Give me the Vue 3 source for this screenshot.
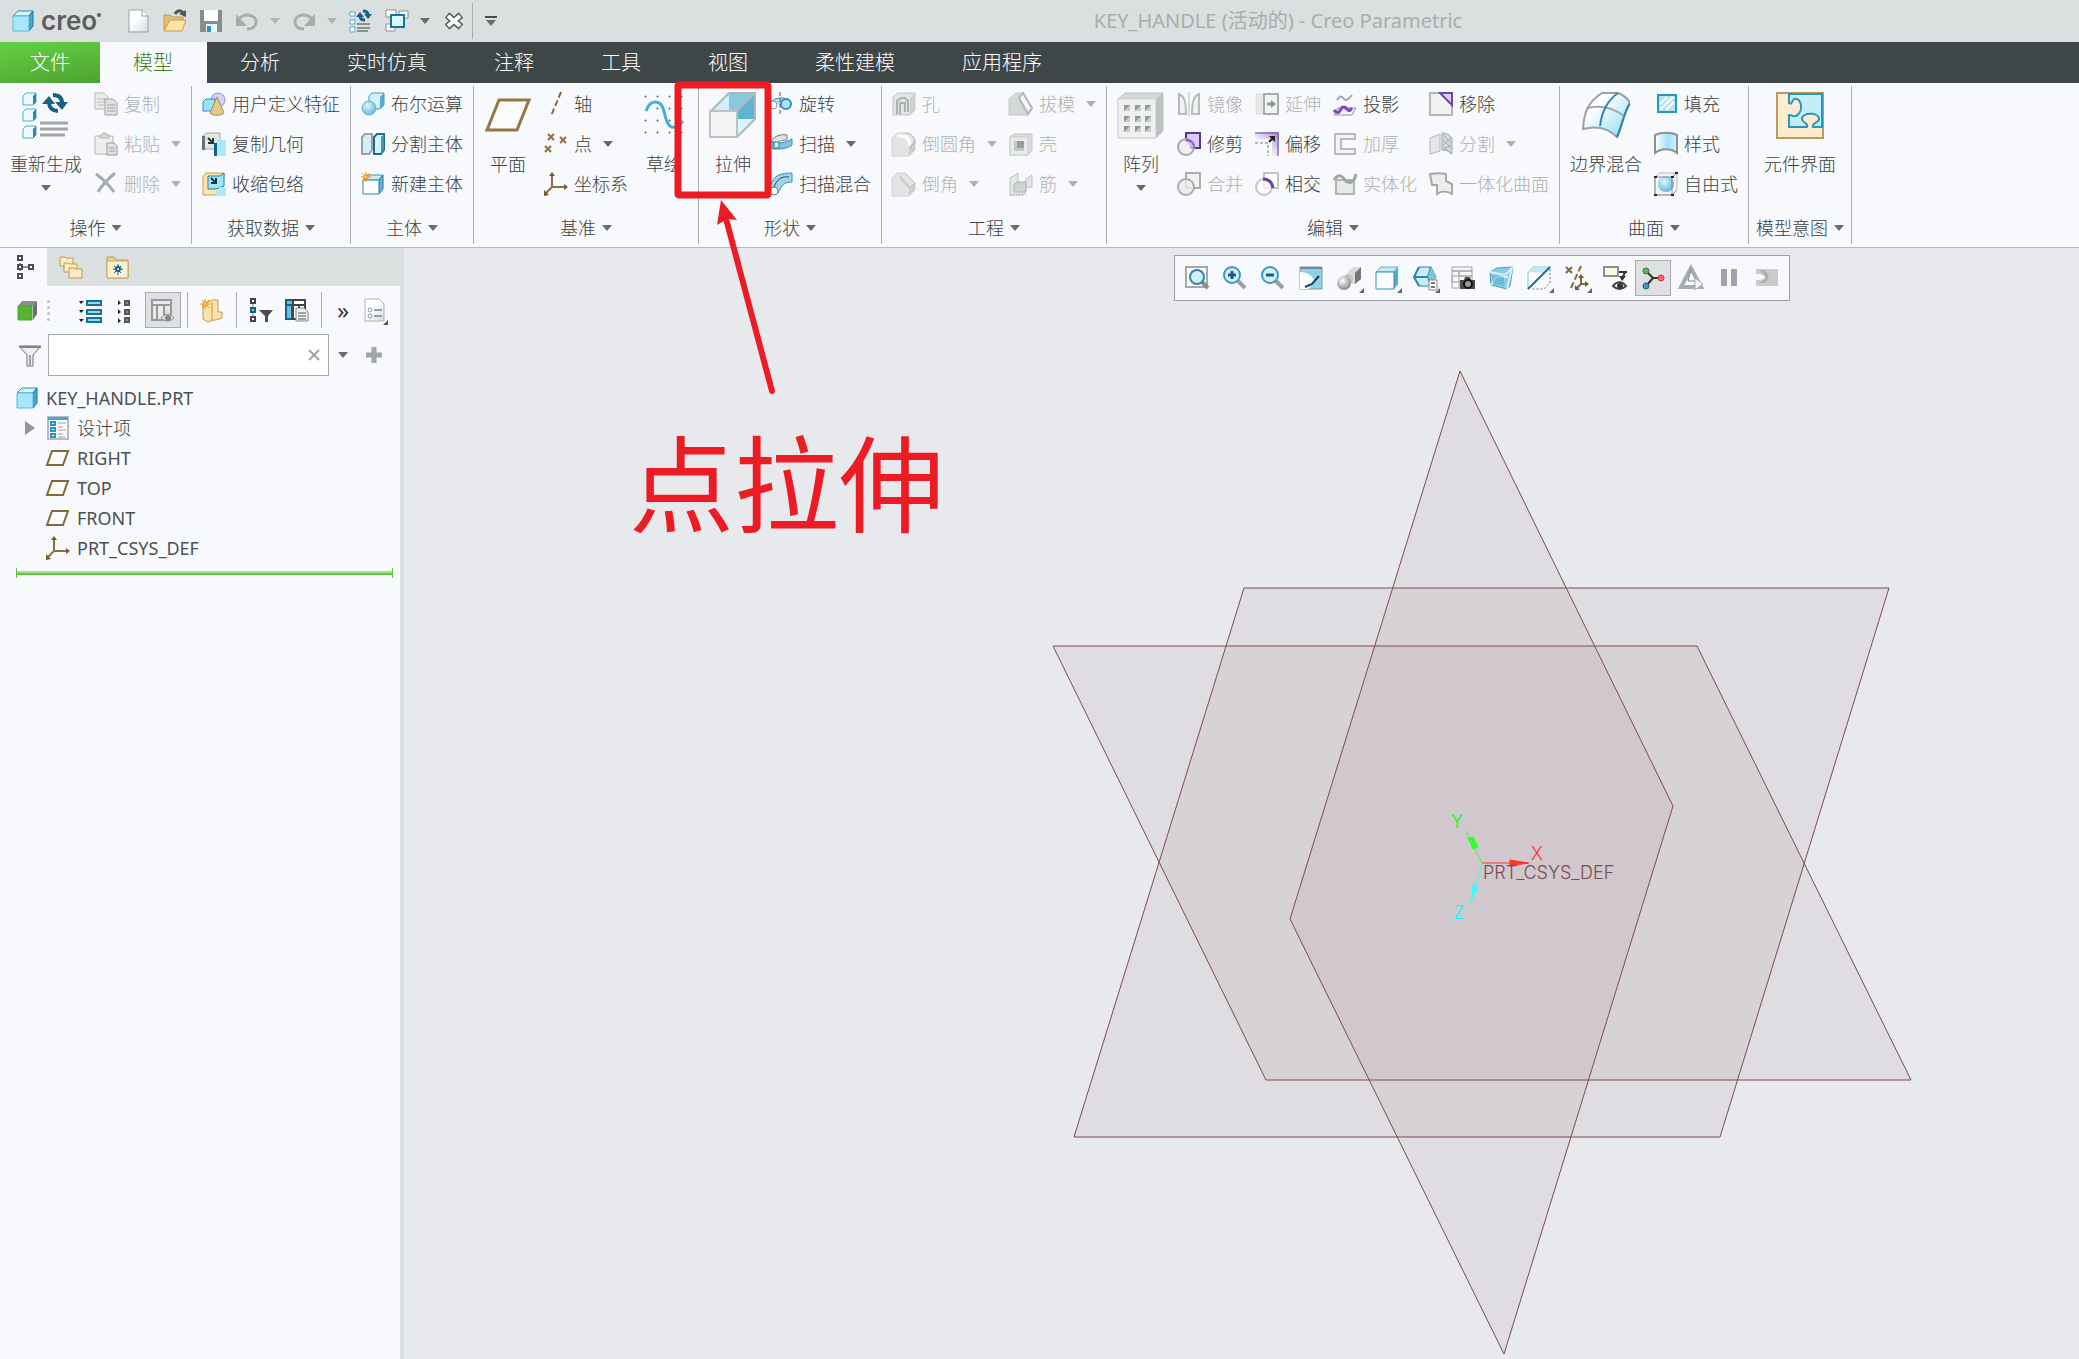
<script setup>
import { ref } from "vue";

const icons = {
  cube: `<path d="M2 7l5-5h15l-4 5z" fill="#d9f5ff" stroke="#2b8ab5"/><path d="M18 7l4-5v15l-4 5z" fill="#4aa5cb" stroke="#1f78a3"/><path d="M2 7h16v15H2z" fill="#a9e6fc" stroke="#5cb8dc"/>`,
  novo: `<path d="M2 1h13l6 6v16H2z" fill="url(#g-page)" stroke="#9b9fa1"/><path d="M15 1v6h6" fill="#fff" stroke="#9b9fa1"/>`,
  open: `<path d="M1 21V6h6l2 2h11v5" fill="#e5be73" stroke="#c79a4a"/><path d="M1 22l6-11h16l-4 11z" fill="#fbe3ac" stroke="#c79a4a"/><path d="M12 5c2-4 6-4 8-1" fill="none" stroke="#555" stroke-width="3"/><path d="M23 1v7l-7-3z" fill="#555"/>`,
  save: `<path d="M1 1h22v22H1z" fill="#8a8d8e"/><path d="M5 1h14v11H5z" fill="#fff"/><path d="M7 15h11v8H7z" fill="#e7f6fc"/><path d="M8 17h4v6H8z" fill="#2f93b8"/>`,
  undo: `<path d="M4 10c6-7 18-4 17 4-1 5-6 6-9 6" fill="none" stroke="#a8acac" stroke-width="3"/><path d="M1 5v12h11z" fill="#a8acac"/>`,
  redo: `<path d="M20 10C14 3 2 6 3 14c1 5 6 6 9 6" fill="none" stroke="#a8acac" stroke-width="3"/><path d="M23 5v12H12z" fill="#a8acac"/>`,
  regen: `<g fill="#fff" stroke="#4aaed6" stroke-width="1"><path d="M1 3h5v4H1zM1 11h5v4H1zM1 18h5v5H1z"/></g><path d="M8 15h13M8 19h13M8 22h11" stroke="#8c8f90" stroke-width="2"/><path d="M11 7c0 3 2 4 5 4M14 2c3 0 5 1 5 4" fill="none" stroke="#17607f" stroke-width="3"/><path d="M7 8l4-5 4 5zM15 5h8l-4 5z" fill="#17607f"/>`,
  windows: `<g fill="#fff" stroke="#8c9091"><path d="M1 1h10v7H1zM14 2h9v7h-9zM1 15h9v7H1z"/><path d="M6 6h13v12H6z" fill="#dff5fc" stroke="#17749b" stroke-width="2"/></g>`,
  close: `<path d="M5 6l14 12M19 6L5 18" stroke="#5c5f60" stroke-width="7"/><path d="M6 7l12 10M18 7L6 17" stroke="#fff" stroke-width="4"/>`,
  copy: `<g fill="#eceeee" stroke="#b6b9ba"><path d="M1 1h9l4 4v12H1z"/><path d="M3 7h8M3 10h8M3 13h8" /><path d="M11 7h8l4 4v12H11z" fill="#e0e2e3" stroke="#9fa3a4"/><path d="M13 13h8M13 16h8M13 19h8" stroke="#9fa3a4"/></g>`,
  paste: `<g fill="#eceeee" stroke="#b3b6b7"><path d="M1 4h18v18H1z"/><path d="M6 6V3h2l1-2h3l1 2h2v3z" fill="#d5d8d8"/><path d="M13 11h7l3 3v9H13z" fill="#e0e2e3" stroke="#999"/><path d="M15 16h6M15 19h6" stroke="#999"/></g>`,
  del: `<path d="M2 2c7 5 13 11 18 18M21 1C14 7 8 13 4 20" fill="none" stroke="#a9acad" stroke-width="3"/>`,
  udf: `<circle cx="16" cy="8" r="7" fill="#cdd3fa" stroke="#8a92d6"/><path d="M1 10l3-3h9v10l-2 2H1z" fill="#9fe0f8" stroke="#2f93b8"/><path d="M15 5l7 16c-3 3-11 3-14 0z" fill="#e6c98c" stroke="#a98a4c"/>`,
  copygeo: `<path d="M1 4l3-3h14v13l-2 3H1z" fill="#e3e5e6" stroke="#a4a7a8"/><path d="M0 4h3v14H0z" fill="#5f7680"/><path d="M6 6l5 5M11 6v5H6" fill="none" stroke="#333" stroke-width="2"/><path d="M12 12l4-4h8v16H14z" fill="#abe9fd"/><path d="M12 11h3v13h-3z" fill="#145f82"/>`,
  shrink: `<path d="M1 5l3-4h18v4l-8 18H1z" fill="#fbe4af" stroke="#cf9f49"/><path d="M6 4h12l4-3v13l-8 3H6z" fill="#a5e4fa" stroke="#1c7ca4"/><path d="M9 6l5 5M14 6v5H9" fill="none" stroke="#12394b" stroke-width="2"/><path d="M14 24v-5l4-4h6v9z" fill="#abe9fd"/>`,
  bool: `<path d="M8 4l3-3h12v12l-4 4H8z" fill="#d3f1fb" stroke="#3c9cc2"/><path d="M19 5l4-4v12l-4 4z" fill="#55a9cb"/><circle cx="8" cy="16" r="7" fill="url(#g-ball)" stroke="#6db5d0"/>`,
  splitbody: `<path d="M1 5l3-3h7v16l-3 4H1z" fill="#d3eef7" stroke="#9ca1a3" stroke-width="2"/><path d="M13 5l3-3h7v16l-3 4h-7z" fill="#d3f2fc" stroke="#1b6e93" stroke-width="2"/><path d="M20 5l3-3v16l-3 4z" fill="#3c94ba"/>`,
  newbody: `<path d="M2 8l4-5h16l-4 5z" fill="#cdeffb" stroke="#3a95bb"/><path d="M18 8l4-5v14l-4 5z" fill="#67b7d7" stroke="#1f7ba4"/><path d="M2 8h16v14H2z" fill="#fff" stroke="#2b8ab5"/><path d="M5 0v10M0 5h10M1 1l8 8M9 1L1 9" stroke="#f28a16" stroke-width="1"/><circle cx="5" cy="5" r="2" fill="#ffd34a" stroke="#f28a16"/>`,
  axis: `<path d="M17 0L7 24" stroke="#84683a" stroke-width="2" stroke-dasharray="6 3"/>`,
  points: `<path d="M4 2l6 6M10 2L4 8M16 5l6 6M22 5l-6 6M1 14l6 6M7 14l-6 6" stroke="#8d7040" stroke-width="2"/>`,
  csys: `<path d="M8 3v12h13M8 15l-6 6" fill="none" stroke="#8d7040" stroke-width="2"/><path d="M5 4l3-4 3 4zM20 12l4 3-4 3zM0 24v-6l5 5z" fill="#77592a"/>`,
  revolve: `<path d="M1 13C1 5 19 3 22 11" fill="#a7dff3" stroke="#4397b9"/><circle cx="4" cy="13" r="4" fill="#fff" stroke="#8c9091"/><circle cx="17" cy="12" r="5" fill="#abe5f9" stroke="#2f93b8" stroke-width="2"/><path d="M11 0v24" stroke="#555" stroke-dasharray="4 2"/>`,
  sweep: `<path d="M2 9c4-6 12-7 16-6v5c-5 0-9 1-9 4z" fill="#dfe1e2" stroke="#777"/><path d="M3 10c6 2 13 1 20-3v6c-4 3-9 4-14 4H3z" fill="#83c4de" stroke="#3b8fb2"/><path d="M5 10h5v6H5z" fill="#cceef9" stroke="#2c7c9e"/>`,
  sweepblend: `<path d="M1 15C4 3 12 1 23 1v9C15 10 13 13 9 21z" fill="#9bd6ed" stroke="#3b8fb2"/><path d="M5 15C8 7 13 4 20 5" fill="none" stroke="#444"/><circle cx="5" cy="19" r="4" fill="#fff" stroke="#777"/>`,
  hole: `<path d="M1 5l5-4h17v17l-5 5H1z" fill="#e1e3e3" stroke="#c4c7c7"/><path d="M18 6l5-5v17l-5 5z" fill="#cdd0d0"/><path d="M5 22V9l4-3h4l3 3v11M8 22V11h5v9" fill="none" stroke="#adb0b1" stroke-width="2"/>`,
  round: `<path d="M0 6l5-5h8c7 0 10 5 10 11v6l-6 6H0z" fill="#e3e5e5" stroke="#d0d3d3"/><path d="M5 4h4c7 0 9 5 9 10" fill="none" stroke="#fff" stroke-width="3"/><path d="M17 24v-9l6-7v10z" fill="#cbcece"/><path d="M13 1c7 0 10 5 10 10l-6 5" fill="none" stroke="#b1b4b5"/>`,
  chamfer: `<path d="M0 6l5-5h8l10 10v7l-6 6H0z" fill="#e3e5e5" stroke="#d0d3d3"/><path d="M17 24v-8l6-5v7z" fill="#cbcece"/><path d="M8 4l9 10M13 1l10 10-6 5-9-10" fill="none" stroke="#b9bcbc"/>`,
  draft: `<path d="M0 7l7-6h7l9 16-4 6H0z" fill="#d5d8d8" stroke="#c4c7c7"/><path d="M10 6l4-5 9 15-4 6z" fill="#f5f6f6" stroke="#b4b7b8" stroke-width="2"/>`,
  shell: `<path d="M1 5l4-3h18v17l-4 4H1z" fill="#dadddd" stroke="#c1c4c4"/><path d="M1 5h18v18H1z" fill="#e9ebeb" stroke="#c8cbcb"/><path d="M5 9h10v10H5z" fill="#c6c9c9"/><path d="M8 9h7v7H8z" fill="#9b9e9f"/>`,
  rib: `<path d="M1 6l8-5v15l14-1V3l-6 4v12l-3 4H1z" fill="#e4e6e6" stroke="#bdc0c0"/><path d="M5 12l4-2h8v10H5z" fill="#d0d3d3" stroke="#b0b3b4"/><path d="M1 23h16" stroke="#9b9e9f" stroke-dasharray="1 2"/>`,
  mirror: `<g fill="#f0f1f1" stroke="#b9bcbd" stroke-width="2"><path d="M2 2c5 2 7 7 7 20H2z"/><path d="M22 2c-5 2-7 7-7 20h7z"/><path d="M12 0v24" stroke-width="1"/></g>`,
  trim: `<path d="M9 1h14v15H14c0-5-2-7-5-7z" fill="#d9cdf8" stroke="#5c3494" stroke-width="2"/><circle cx="9" cy="15" r="8" fill="#ebedee" fill-opacity=".7" stroke="#a4a7a8" stroke-width="2"/><path d="M9 8c5 0 8 3 8 8" fill="none" stroke="#9a5ae0" stroke-width="2"/>`,
  merge: `<path d="M9 1h14v15H9z" fill="#eff0f0" stroke="#abaeaf" stroke-width="2"/><circle cx="9" cy="15" r="8" fill="#eceeee" stroke="#abaeaf" stroke-width="2"/><path d="M9 8v8h7" fill="none" stroke="#cfd2d2"/>`,
  extend: `<path d="M1 2h9v20H1z" fill="#e5e7e7" stroke="#dcdede"/><path d="M9 2h14v20H9z" fill="#f2f3f3" stroke="#a9acad" stroke-width="2"/><path d="M12 12h5" stroke="#8f9293" stroke-width="3"/><path d="M16 8l5 4-5 4z" fill="#8f9293"/>`,
  offset: `<path d="M0 0h24v24h-7V7H0z" fill="url(#g-purple)"/><path d="M0 1h23v23" fill="none" stroke="#6e4a98" stroke-width="1"/><path d="M0 11h13v13" fill="none" stroke="#777" stroke-dasharray="3 2" stroke-width="1"/><path d="M14 10l4-4" stroke="#222" stroke-width="2"/><path d="M14 4h6v6z" fill="#222"/>`,
  intersect: `<path d="M9 1h14v15H9z" fill="#fff" stroke="#c2c5c6" stroke-width="2"/><circle cx="9" cy="15" r="8" fill="#fff" stroke="#c2c5c6" stroke-width="2"/><path d="M9 8v8h7" fill="none" stroke="#d8dadb"/><path d="M8 7c6 0 9 3 10 9" fill="none" stroke="#6c3fa3" stroke-width="3"/>`,
  project: `<path d="M4 8c4-6 5-3 7-1s4 1 8-4" fill="none" stroke="#a5a8a9" stroke-width="2"/><path d="M5 16h18l-4 7H1z" fill="#f3f4f4" stroke="#8f9293"/><path d="M1 18c3 4 5 3 7-1s5-1 7 1 3-1 4-2" fill="none" stroke="#8444c4" stroke-width="3"/>`,
  thicken: `<path d="M2 2h20v5H8v10h14v5H2z" fill="#f2f3f3" stroke="#b9bcbd" stroke-width="2"/>`,
  solidify: `<path d="M3 8h18v14H3z" fill="#e7e9e9" stroke="#b0b3b4" stroke-width="2"/><path d="M1 8c5-7 8-4 11 0s9 4 11-6" fill="none" stroke="#a1a4a5" stroke-width="3"/>`,
  remove: `<path d="M1 1h22v22H1z" fill="#f1f2f2" stroke="#b4b7b8" stroke-width="2"/><path d="M11 1h12v12z" fill="#dccff9" stroke="#6f45a8" stroke-width="2"/>`,
  split: `<path d="M1 6l10-4v17L1 22z" fill="#e6e8e8" stroke="#b4b7b8"/><path d="M13 1c4 0 8 2 10 5v16c-3-3-6-4-10-4z" fill="#d7dada" stroke="#a5a8a9"/><path d="M14 3l8 8M14 8l8 8M14 14l8 8M22 6l-8 7M22 13l-8 5" stroke="#a5a8a9"/>`,
  unify: `<path d="M1 2c6-1 11-1 16 0v7l6 3v10c-5-3-11-3-15 0V13H3z" fill="#eceeee" stroke="#a5a8a9" stroke-width="2"/>`,
  fill: `<path d="M4 3h18v17H4z" fill="#abe5fa" stroke="#2d94bd" stroke-width="2"/><path d="M6 12l7-7M6 18L19 5M12 18l8-8" stroke="#fff" stroke-width="2"/>`,
  style: `<path d="M1 3c6-3 16-3 22 0v18c-6-5-16-5-22 0z" fill="url(#g-style)" stroke="#8f9293" stroke-width="2"/>`,
  freestyle: `<path d="M1 5l5-4h17v17l-5 5H1z" fill="#f2f3f3" stroke="#bbb"/><circle cx="12" cy="12" r="8" fill="url(#g-ball)"/><path d="M1 5h17v18H1zM18 5l5-4M18 23l5-5" fill="none" stroke="#8c8f90"/><path d="M0 4h3v2H0zM17 4h3v2h-3zM0 22h3v2H0zM17 22h3v2h-3zM21 0h3v2h-3z" fill="#222"/>`,
  treetab: `<g fill="#fff" stroke="#4a4c4d" stroke-width="2"><path d="M8 8v8M11 12h6" stroke="#8c8f90"/><path d="M6 1h4v4H6zM6 10h4v4H6zM6 19h4v4H6zM17 10h4v4h-4z"/></g>`,
  folders: `<g fill="#fdebc4" stroke="#c39a52"><path d="M1 2h5l1 1h7v8H1z"/><path d="M5 8h5l1 1h7v8H5z"/><path d="M10 13h5l1 1h7v9H10z"/></g>`,
  favorites: `<path d="M1 2h7l2 3h12v18H1z" fill="#efcf8f" stroke="#c39a52"/><path d="M1 6h21v17H1z" fill="#fdf0cf" stroke="#c9a45e"/><path d="M12 9v11M7 14h10M8 11l7 7M15 11l-7 7" stroke="#17607f" stroke-width="1"/><circle cx="12" cy="14" r="3" fill="#17607f"/><circle cx="12" cy="14" r="1" fill="#fff"/>`,
  greencube: `<path d="M3 8l4-5h15l-4 5z" fill="#8b8e8f"/><path d="M18 8l4-5v13l-4 6z" fill="#6f7273"/><path d="M3 8h14v14H3z" fill="#58b534" stroke="#4aa32a"/>`,
  expand: `<path d="M8 3h14v4H8zM8 12h14v4H8zM8 20h14v4H8z" fill="#87dcfb" stroke="#1c6f94" stroke-width="2"/><path d="M0 3h5L2 6zM0 12h5l-3 3zM0 21h5l-3 3z" fill="#222"/>`,
  collapse: `<path d="M10 3h4v4h-4zM10 12h4v4h-4zM10 20h4v4h-4z" fill="#8c8f90" stroke="#555" stroke-width="2"/><path d="M3 2v5l3-2zM3 11v5l3-2zM3 20v5l3-2z" fill="#222"/>`,
  columns: `<path d="M1 2h19v5H1zM1 7h5v15H1zM6 7h7v15H6zM13 7h7v10" fill="#e8e9ea" stroke="#979a9b" stroke-width="2"/><path d="M10 20c4-5 9-5 13 0-4 4-9 4-13 0z" fill="#ddd" stroke="#8c8f90"/><circle cx="17" cy="20" r="3" fill="#85888a"/>`,
  layer: `<path d="M3 6l9-4h6v12h4v6l-6 2h-3l-5 2-5-3z" fill="#fbe3ad" stroke="#c79a4a"/><path d="M12 4v19" stroke="#c79a4a"/><path d="M5 1v10M0 6h10M2 2l7 8M9 2L2 10" stroke="#f28a16"/><circle cx="5" cy="6" r="2" fill="#ffd34a" stroke="#f28a16"/>`,
  treefilter: `<path d="M4 5v16" stroke="#888"/><g fill="#fff" stroke="#444" stroke-width="2"><path d="M2 1h4v4H2zM2 19h4v4H2z"/><path d="M2 10h4v4H2z" fill="#6fd0f3" stroke="#17607f"/></g><path d="M10 12h14l-5 6v6h-3v-6z" fill="#4a4c4d"/>`,
  treecols: `<path d="M1 2h19v5H1zM1 7h6v14H1z" fill="#62c2e6" stroke="#17607f" stroke-width="2"/><path d="M8 2h12v5H8zM8 7h6v14H8zM14 7h6v5" fill="#fff" stroke="#444" stroke-width="2"/><path d="M11 10h8l4 4v9H11z" fill="#f0f1f1" stroke="#85888a"/><path d="M13 15h8M13 18h8M13 21h8" stroke="#555"/>`,
  doc: `<path d="M1 1h14l5 5v17H1z" fill="url(#g-page)" stroke="#b0b3b4"/><path d="M10 12h8M10 18h8" stroke="#999" stroke-width="2"/><g fill="none" stroke="#999"><circle cx="6" cy="12" r="2"/><circle cx="6" cy="18" r="2"/></g><path d="M24 22v5h-5z" fill="#555"/>`,
  funnel: `<path d="M1 3h22l-8 9v11h-6V12z" fill="#eef0f0" stroke="#6f7273"/><path d="M1 3h22v2H2z" fill="#808384"/><path d="M12 12v10" stroke="#9ea1a2" stroke-width="2"/>`,
  plus: `<path d="M12 4v16M4 12h16" stroke="#a2a6a7" stroke-width="5"/>`,
  design: `<path d="M2 1h20v22H2z" fill="#f8f9f9" stroke="#b9bcbd" stroke-width="2"/><path d="M2 1h20v3H2z" fill="#43a9d4"/><path d="M5 6h4v3H5zM5 12h4v3H5zM5 18h4v3H5z" fill="#fff" stroke="#2d94bd" stroke-width="2"/><path d="M12 7h8M12 11h5M12 14h8M12 18h5M12 21h7" stroke="#9fa2a3"/>`,
  plane: `<path d="M6 5h16l-5 14H1z" fill="#fbfbfa" stroke="#84683a" stroke-width="2"/>`,
  refit: `<path d="M1 1h21v20H1z" fill="#fdfdfd" stroke="#a5a8a9" stroke-width="2"/><path d="M17 16l6 6" stroke="#8c8f90" stroke-width="4"/><circle cx="12" cy="11" r="7" fill="#d5effa" stroke="#2d87ad" stroke-width="2"/>`,
  zoomin: `<path d="M15 15l7 7" stroke="#9c9fa0" stroke-width="4"/><circle cx="9" cy="9" r="8" fill="#d5effa" stroke="#3a97be" stroke-width="2"/><path d="M9 5v8M5 9h8" stroke="#145f82" stroke-width="3"/>`,
  zoomout: `<path d="M15 15l7 7" stroke="#9c9fa0" stroke-width="4"/><circle cx="9" cy="9" r="8" fill="#d5effa" stroke="#3a97be" stroke-width="2"/><path d="M5 9h8" stroke="#145f82" stroke-width="3"/>`,
  repaint: `<path d="M1 1h22v22H1z" fill="#8fd3ea" stroke="#8a9498"/><path d="M1 2h22" stroke="#6d8f9c" stroke-width="2"/><path d="M1 6c7 0 13 4 15 10l-7 7H1z" fill="#fff"/><path d="M20 10l-7 8-7 3" fill="none" stroke="#123f53" stroke-width="2"/>`,
  shading: `<path d="M10 7l6-6h8v12l-6 5h-8z" fill="#d9dbdb"/><path d="M18 7l6-6v12l-6 5z" fill="#737677"/><circle cx="11" cy="13" r="5" fill="#bfc1c2"/><circle cx="7" cy="17" r="7" fill="url(#g-grey)"/>`,
  saved: `<path d="M1 6l5-5h17l-4 5z" fill="#c2ecfa" stroke="#5db3d2"/><path d="M19 6l4-5v17l-4 5z" fill="#58a9c9"/><path d="M1 6h18v17H1z" fill="#fcfeff" stroke="#2d94bd"/>`,
  viewmgr: `<path d="M6 1h12l5 10-5 9H6l-5-9z" fill="#c4ecf9" stroke="#2d87ad"/><path d="M1 11h14l3-10M15 11l3 9M6 1L1 11l5 9" fill="none" stroke="#2d87ad" stroke-width="2"/><path d="M18 1l5 10-5 9-3-9z" fill="#7fc3dd"/><path d="M16 14h8v10h-8z" fill="#fff" stroke="#85888a"/><path d="M18 17h4M18 21h4" stroke="#777" stroke-width="2"/>`,
  snapshot: `<path d="M1 1h20v4H1zM1 5h7v17H1zM8 5h13v5H8zM1 10h20v6H1z" fill="#f6f7f7" stroke="#a0a3a4"/><path d="M9 14h4l1-3h5l1 3h4v9H9z" fill="#4a4c4d"/><circle cx="17" cy="18" r="4" fill="#999" stroke="#111" stroke-width="2"/>`,
  persp: `<path d="M1 6l7-4 16-1-3 19-3 3-16-4z" fill="#8acce4" stroke="#4a9dbd"/><path d="M1 6l15 3 7-7-5 21M2 19l5-8h12" fill="none" stroke="#d7f2fb" stroke-width="2"/><path d="M3 9l12 2v9L4 18z" fill="#5cadcb" fill-opacity=".6"/>`,
  section: `<path d="M1 7l5-6h17L1 23z" fill="#fff" stroke="#7fc2da"/><path d="M3 6l4-5h15l-5 6z" fill="#bfe9f7"/><path d="M23 3v14l-6 6H4" fill="none" stroke="#777" stroke-dasharray="2 2"/><path d="M23 1L1 23" stroke="#1e6f92" stroke-width="2"/>`,
  datums: `<path d="M1 1l6 6M7 1L1 7" stroke="#84683a" stroke-width="2"/><path d="M16 0L5 24" stroke="#84683a" stroke-width="2" stroke-dasharray="6 3"/><path d="M16 11v7h5M16 18l-4 4" fill="none" stroke="#84683a" stroke-width="2" /><path d="M13 12l3-4 3 4zM20 15l4 3-4 3zM10 24v-5l5 5z" fill="#77592a"/>`,
  annot: `<path d="M1 1h14v9H1z" fill="#fff8df" stroke="#8c8f90" stroke-width="2"/><path d="M16 6h8M22 6l-3 7" stroke="#333" stroke-width="2"/><path d="M16 10h7l-4 5z" fill="#333"/><path d="M10 20c4-5 9-5 13 0-4 4-9 4-13 0z" fill="#fff" stroke="#444" stroke-width="2"/><circle cx="17" cy="20" r="3" fill="#333"/>`,
  spin: `<path d="M5 5l7 7M12 12h8M12 12l-7 8" stroke="#333" stroke-width="2"/><circle cx="5" cy="5" r="3" fill="#64b266" stroke="#2b7c33"/><circle cx="20" cy="12" r="3" fill="#f0686c" stroke="#c63a40"/><circle cx="5" cy="20" r="3" fill="#3c96c4" stroke="#17607f"/>`,
  sim: `<path d="M12 2L2 21h20z" fill="none" stroke="#a9acad" stroke-width="4"/><path d="M12 3l-3 12h7" fill="none" stroke="#85888a"/><path d="M16 12l8 6-8 6z" fill="#f4f5f5" stroke="#a9acad"/>`,
  pause: `<path d="M4 3h6v17H4zM14 3h6v17h-6z" fill="#a0a2a4"/>`,
  resume: `<path d="M1 3h22v17H1v-6c12 0 12-6 0-6z" fill="#c9cbcd"/><path d="M3 4h6c6 3 6 10 0 13H5c8-4 6-9-2-13z" fill="#aeb0b2"/>`,
};

// ícones grandes, 48x48
const bigIcons = {
  regen: `<g fill="#eefaff" stroke="#4aaed6"><path d="M1 4l3-3h10v9l-3 3H1zM1 20l3-3h10v9l-3 3H1zM1 37l3-3h10v9l-3 3H1z"/></g><path d="M11 4l3-3v9l-3 3zM11 20l3-3v9l-3 3zM11 37l3-3v9l-3 3z" fill="#2d87ad"/><path d="M18 31h28M18 37h28M18 43h25" stroke="#a3a6a7" stroke-width="3"/><path d="M27 10c0 6 4 9 9 9M31 3c6 0 9 3 9 8" fill="none" stroke="#17607f" stroke-width="4"/><path d="M20 12l7-8 6 8zM33 10h13l-6 8z" fill="#17607f"/>`,
  plane: `<path d="M15 8h30L33 38H3z" fill="#fbfbfa" stroke="#947744" stroke-width="3"/>`,
  sketch: `<g fill="#666"><path d="M5 4h1v1H5zM17 4h1v1h-1zM29 4h1v1h-1zM41 4h1v1h-1zM17 16h1v1h-1zM29 16h1v1h-1zM41 16h1v1h-1zM5 28h1v1H5zM17 28h1v1h-1zM29 28h1v1h-1zM5 40h1v1H5zM17 40h1v1h-1zM29 40h1v1h-1zM41 40h1v1h-1z" stroke="#666"/></g><path d="M6 19c4-12 15-12 18 0 3 16 8 22 19 10" fill="none" stroke="#3fb0e0" stroke-width="3"/>`,
  extrude: `<path d="M2 19L20 1h26L28 19z" fill="#cbeefa"/><path d="M20 1h26L28 19h-8z" fill="#86cae2"/><path d="M46 1v26H28v-8z" fill="#5fb4d4"/><path d="M2 19L20 1v18z" fill="#d0f0fb"/><path d="M28 27h18L28 45z" fill="#d8f5ff"/><path d="M2 19L20 1h26v26L28 45M46 1L28 19" fill="none" stroke="#b0b8bb" stroke-width="2"/><path d="M1 19h27v26H1z" fill="#f4f5f5" stroke="#bfc2c3" stroke-width="2"/>`,
  pattern: `<path d="M1 7l7-6h38v38l-7 7H1z" fill="#d5d7d7" stroke="#c1c4c4"/><path d="M1 7h38v39H1z" fill="#eff0f0" stroke="#cfd2d2"/><path d="M39 7l7-6v38l-7 7z" fill="#bec1c1"/><path d="M7 13h6v6H7zM18 13h6v6h-6zM28 13h6v6h-6zM7 24h6v6H7zM18 24h6v6h-6zM28 24h6v6h-6zM7 34h6v6H7zM18 34h6v6h-6zM28 34h6v6h-6z" fill="#94979a"/><path d="M7 19l6-6v6zM18 19l6-6v6zM28 19l6-6v6zM7 30l6-6v6zM18 30l6-6v6zM28 30l6-6v6zM7 40l6-6v6zM18 40l6-6v6zM28 40l6-6v6z" fill="#c9cccc"/>`,
  boundary: `<path d="M1 37C2 20 6 10 20 1h16c5 2 10 6 12 10-6 9-7 20-13 34-8-8-19-12-34-8z" fill="url(#g-blue)" stroke="#9b9fa1" stroke-width="2"/><path d="M6 16c12-3 24-1 36 8" fill="none" stroke="#a5a8a9" stroke-width="2"/><path d="M36 1C26 8 20 18 18 34M48 11c-6 9-7 20-13 34" fill="none" stroke="#2d87ad" stroke-width="2"/>`,
  interface: `<path d="M1 1h46v45H1z" fill="#fdeccb" stroke="#b99a63" stroke-width="2"/><path d="M13 2h33v33H37c-2-4 6-4 6-8 0-7-17-7-17 0 0 4 7 4 5 8H13V23c5 0 2 2 7 1 8-4 6-19-2-17-3 2-1 6-5 4z" fill="#c3edfb" stroke="#2d94bd" stroke-width="2"/>`,
};

const quickA = ["novo", "open", "save"];

const tabs = ["分析", "实时仿真", "注释", "工具", "视图", "柔性建模", "应用程序"];

// t: texto, i: ícone, d: desabilitado, s: tem seta
const groups = ref([
  {
    nome: "操作",
    cols: [
      { big: "regen", t: "重新生成", s: true },
      {
        items: [
          { i: "copy", t: "复制", d: true },
          { i: "paste", t: "粘贴", d: true, s: true },
          { i: "del", t: "删除", d: true, s: true },
        ],
      },
    ],
  },
  {
    nome: "获取数据",
    cols: [
      {
        items: [
          { i: "udf", t: "用户定义特征" },
          { i: "copygeo", t: "复制几何" },
          { i: "shrink", t: "收缩包络" },
        ],
      },
    ],
  },
  {
    nome: "主体",
    cols: [
      {
        items: [
          { i: "bool", t: "布尔运算" },
          { i: "splitbody", t: "分割主体" },
          { i: "newbody", t: "新建主体" },
        ],
      },
    ],
  },
  {
    nome: "基准",
    cols: [
      { big: "plane", t: "平面" },
      {
        items: [
          { i: "axis", t: "轴" },
          { i: "points", t: "点", s: true },
          { i: "csys", t: "坐标系" },
        ],
      },
      { big: "sketch", t: "草绘" },
    ],
  },
  {
    nome: "形状",
    cols: [
      { big: "extrude", t: "拉伸" },
      {
        items: [
          { i: "revolve", t: "旋转" },
          { i: "sweep", t: "扫描", s: true },
          { i: "sweepblend", t: "扫描混合" },
        ],
      },
    ],
  },
  {
    nome: "工程",
    cols: [
      {
        items: [
          { i: "hole", t: "孔", d: true },
          { i: "round", t: "倒圆角", d: true, s: true },
          { i: "chamfer", t: "倒角", d: true, s: true },
        ],
      },
      {
        items: [
          { i: "draft", t: "拔模", d: true, s: true },
          { i: "shell", t: "壳", d: true },
          { i: "rib", t: "筋", d: true, s: true },
        ],
      },
    ],
  },
  {
    nome: "编辑",
    cols: [
      { big: "pattern", t: "阵列", s: true },
      {
        items: [
          { i: "mirror", t: "镜像", d: true },
          { i: "trim", t: "修剪" },
          { i: "merge", t: "合并", d: true },
        ],
      },
      {
        items: [
          { i: "extend", t: "延伸", d: true },
          { i: "offset", t: "偏移" },
          { i: "intersect", t: "相交" },
        ],
      },
      {
        items: [
          { i: "project", t: "投影" },
          { i: "thicken", t: "加厚", d: true },
          { i: "solidify", t: "实体化", d: true },
        ],
      },
      {
        items: [
          { i: "remove", t: "移除" },
          { i: "split", t: "分割", d: true, s: true },
          { i: "unify", t: "一体化曲面", d: true },
        ],
      },
    ],
  },
  {
    nome: "曲面",
    cols: [
      { big: "boundary", t: "边界混合" },
      {
        items: [
          { i: "fill", t: "填充" },
          { i: "style", t: "样式" },
          { i: "freestyle", t: "自由式" },
        ],
      },
    ],
  },
  {
    nome: "模型意图",
    cols: [{ big: "interface", t: "元件界面" }],
  },
]);

const tree = [
  { i: "plane", t: "RIGHT" },
  { i: "plane", t: "TOP" },
  { i: "plane", t: "FRONT" },
  { i: "csys", t: "PRT_CSYS_DEF" },
];

const viewTools = ref([
  { i: "refit" },
  { i: "zoomin" },
  { i: "zoomout" },
  { i: "repaint" },
  { i: "shading", s: true },
  { i: "saved", s: true },
  { i: "viewmgr", s: true },
  { i: "snapshot" },
  { i: "persp" },
  { i: "section", s: true },
  { i: "datums", s: true },
  { i: "annot" },
  { i: "spin", on: true },
  { i: "sim" },
  { i: "pause" },
  { i: "resume" },
]);

const busca = ref("");
</script>

<template>
  <div class="app">
    <svg class="defs" width="0" height="0">
      <defs>
        <linearGradient id="g-page" x1="0" y1="0" x2="1" y2="1">
          <stop offset="0.4" stop-color="#fff" />
          <stop offset="1" stop-color="#cfdde6" />
        </linearGradient>
        <linearGradient id="g-blue" x1="0" y1="0" x2="1" y2="1">
          <stop offset="0.3" stop-color="#fff" />
          <stop offset="0.8" stop-color="#a6e5fb" />
        </linearGradient>
        <linearGradient id="g-style">
          <stop offset="0" stop-color="#fff" />
          <stop offset="0.6" stop-color="#a0e3fb" />
          <stop offset="1" stop-color="#d5f3fd" />
        </linearGradient>
        <linearGradient id="g-purple" x1="0" y1="1" x2="1" y2="0">
          <stop offset="0.3" stop-color="#fff" />
          <stop offset="1" stop-color="#a98bd0" />
        </linearGradient>
        <radialGradient id="g-ball" cx="0.4" cy="0.35" r="0.7">
          <stop offset="0" stop-color="#e0f7ff" />
          <stop offset="1" stop-color="#5ab4d6" />
        </radialGradient>
        <radialGradient id="g-grey" cx="0.4" cy="0.35" r="0.7">
          <stop offset="0" stop-color="#fff" />
          <stop offset="1" stop-color="#7d8081" />
        </radialGradient>
      </defs>
    </svg>

    <header class="titlebar">
      <svg class="ico" viewBox="0 0 24 24" v-html="icons.cube"></svg>
      <span class="brand">creo<i class="dot"></i></span>
      <div class="quick">
        <button v-for="q in quickA" :key="q" class="quick-btn" :aria-label="q">
          <svg class="ico" viewBox="0 0 24 24" v-html="icons[q]"></svg>
        </button>
        <button class="quick-btn off" aria-label="undo">
          <svg class="ico" viewBox="0 0 24 24" v-html="icons.undo"></svg>
          <span class="seta"></span>
        </button>
        <button class="quick-btn off" aria-label="redo">
          <svg class="ico" viewBox="0 0 24 24" v-html="icons.redo"></svg>
          <span class="seta"></span>
        </button>
        <button class="quick-btn" aria-label="regenerate">
          <svg class="ico" viewBox="0 0 24 24" v-html="icons.regen"></svg>
        </button>
        <button class="quick-btn" aria-label="windows">
          <svg class="ico" viewBox="0 0 24 24" v-html="icons.windows"></svg>
          <span class="seta"></span>
        </button>
        <button class="quick-btn" aria-label="close">
          <svg class="ico" viewBox="0 0 24 24" v-html="icons.close"></svg>
        </button>
      </div>
      <button class="quick-more" aria-label="more"><span class="seta"></span></button>
      <h1 class="title">KEY_HANDLE (活动的) - Creo Parametric</h1>
    </header>

    <nav class="tabs">
      <button class="tab file">文件</button>
      <button class="tab active">模型</button>
      <button v-for="tab in tabs" :key="tab" class="tab">{{ tab }}</button>
    </nav>

    <section class="ribbon">
      <div v-for="g in groups" :key="g.nome" class="group">
        <div class="group-body">
          <template v-for="(col, index) in g.cols" :key="index">
            <button v-if="col.big" class="big">
              <svg class="big-ico" viewBox="0 0 48 48" v-html="bigIcons[col.big]"></svg>
              <span>{{ col.t }}</span>
              <span v-if="col.s" class="seta"></span>
            </button>
            <div v-else class="col">
              <button v-for="item in col.items" :key="item.t" class="cmd" :disabled="item.d">
                <svg class="ico" viewBox="0 0 24 24" v-html="icons[item.i]"></svg>
                <span>{{ item.t }}</span>
                <span v-if="item.s" class="seta"></span>
              </button>
            </div>
          </template>
        </div>
        <button class="group-name">{{ g.nome }}<span class="seta"></span></button>
      </div>
    </section>

    <main class="main">
      <aside class="side">
        <div class="side-tabs">
          <button class="side-tab active" aria-label="tree">
            <svg class="ico" viewBox="0 0 24 24" v-html="icons.treetab"></svg>
          </button>
          <button class="side-tab" aria-label="folders">
            <svg class="ico" viewBox="0 0 24 24" v-html="icons.folders"></svg>
          </button>
          <button class="side-tab" aria-label="favorites">
            <svg class="ico" viewBox="0 0 24 24" v-html="icons.favorites"></svg>
          </button>
        </div>

        <div class="side-tools">
          <svg class="ico" viewBox="0 0 24 24" v-html="icons.greencube"></svg>
          <span class="grip"><i></i><i></i><i></i><i></i></span>
          <button class="tool" aria-label="expand">
            <svg class="ico" viewBox="0 0 24 24" v-html="icons.expand"></svg>
          </button>
          <button class="tool" aria-label="collapse">
            <svg class="ico" viewBox="0 0 24 24" v-html="icons.collapse"></svg>
          </button>
          <button class="tool on" aria-label="columns">
            <svg class="ico" viewBox="0 0 24 24" v-html="icons.columns"></svg>
          </button>
          <span class="sep"></span>
          <button class="tool" aria-label="layer">
            <svg class="ico" viewBox="0 0 24 24" v-html="icons.layer"></svg>
          </button>
          <span class="sep"></span>
          <button class="tool" aria-label="tree filter">
            <svg class="ico" viewBox="0 0 24 24" v-html="icons.treefilter"></svg>
          </button>
          <button class="tool" aria-label="tree columns">
            <svg class="ico" viewBox="0 0 24 24" v-html="icons.treecols"></svg>
          </button>
          <span class="sep"></span>
          <button class="tool more">»</button>
          <button class="tool" aria-label="settings">
            <svg class="ico" viewBox="0 0 24 24" v-html="icons.doc"></svg>
          </button>
        </div>

        <div class="search">
          <svg class="ico" viewBox="0 0 24 24" v-html="icons.funnel"></svg>
          <div class="search-box">
            <input v-model="busca" type="text" aria-label="search" />
            <button class="clear" aria-label="clear" @click="busca = ''">
              <svg width="12" height="12" viewBox="0 0 12 12">
                <path d="M1 1l10 10M11 1L1 11" stroke="#a0a4a5" stroke-width="2" />
              </svg>
            </button>
          </div>
          <span class="seta"></span>
          <button class="add" aria-label="add">
            <svg class="ico" viewBox="0 0 24 24" v-html="icons.plus"></svg>
          </button>
        </div>

        <ul class="tree">
          <li class="root">
            <svg class="ico" viewBox="0 0 24 24" v-html="icons.cube"></svg>KEY_HANDLE.PRT
          </li>
          <li class="design">
            <svg class="caret" width="10" height="14" viewBox="0 0 10 14">
              <path d="M0 0l10 7-10 7z" fill="#929697" />
            </svg>
            <svg class="ico" viewBox="0 0 24 24" v-html="icons.design"></svg>设计项
          </li>
          <li v-for="n in tree" :key="n.t">
            <svg class="ico" viewBox="0 0 24 24" v-html="icons[n.i]"></svg>{{ n.t }}
          </li>
        </ul>
        <div class="insert"></div>
      </aside>

      <section class="canvas">
        <svg class="scene" width="100%" height="100%">
          <g class="planes">
            <path d="M1056 123L1269 558L1100 1106L886 671z" />
            <path d="M840 340H1485L1316 889H670z" />
            <path d="M649 398H1293L1507 832H862z" />
          </g>
          <g class="axes">
            <path d="M1078 615h47" stroke="#ff3232" />
            <path d="M1106 612l18 3-18 3z" fill="#ff3232" stroke="#ff3232" />
            <path d="M1078 615l-16-32" stroke="#32ff32" />
            <path d="M1064 590l5-1 5 10-5 2z" fill="#32ff32" stroke="#32ff32" />
            <path d="M1078 615l-12 40" stroke="#32ffff" />
            <path d="M1069 637l5 1-6 13z" fill="#32ffff" stroke="#32ffff" />
            <text x="1127" y="612" fill="#ff3232">X</text>
            <text x="1047" y="580" fill="#00ff00">Y</text>
            <text x="1049" y="671" fill="#00ffff">Z</text>
            <text x="1079" y="631" fill="#7d4a50">PRT_CSYS_DEF</text>
          </g>
        </svg>

        <div class="view-tools">
          <button
            v-for="v in viewTools"
            :key="v.i"
            class="view-btn"
            :class="{ on: v.on }"
            :aria-label="v.i"
          >
            <svg class="ico" viewBox="0 0 24 24" v-html="icons[v.i]"></svg>
            <span v-if="v.s" class="corner"></span>
          </button>
        </div>
      </section>
    </main>

    <svg class="note" width="960" height="560">
      <rect x="678" y="85" width="90" height="110" fill="none" stroke="#ed1c24" stroke-width="7" rx="1" />
      <path d="M772 391L725 215" stroke="#ed1c24" stroke-width="6" stroke-linecap="round" />
      <path d="M721 200l16 20-10-1-10 6z" fill="#ed1c24" />
      <text x="629" y="524">点拉伸</text>
    </svg>
  </div>
</template>

<style>
body {
  margin: 0;
  background: #e8e9ed;
}
</style>

<style scoped>
.app {
  position: relative;
  display: flex;
  flex-direction: column;
  min-height: 100vh;
  overflow: hidden;
  font-family: "Noto Sans", "Noto Sans CJK SC", sans-serif;
  font-size: 18px;
  font-weight: 300;
  line-height: 24px;
  color: #3c3f40;
}

button {
  display: flex;
  align-items: center;
  padding: 0;
  border: 0;
  background: none;
  color: inherit;
  font: inherit;
  white-space: nowrap;
}

.defs {
  position: absolute;
}

.ico {
  flex: none;
  width: 24px;
  height: 24px;
  overflow: visible;
}

.seta {
  flex: none;
  width: 10px;
  height: 6px;
  background: #686b6c;
  clip-path: polygon(0 0, 100% 0, 50% 100%);
}

.titlebar {
  display: flex;
  align-items: center;
  height: 42px;
  padding-left: 11px;
  background: #dadfdf;
}

.brand {
  display: flex;
  width: 60px;
  margin: 0 26px 0 6px;
  font-family: Inter, sans-serif;
  font-size: 26px;
  font-weight: 600;
  color: #5b5e5f;
}

.dot {
  width: 4px;
  height: 4px;
  margin-top: 4px;
  border-radius: 2px;
  background: #5b5e5f;
}

.quick {
  display: flex;
  gap: 12px;
}

.quick-btn {
  gap: 11px;
}

.off .seta {
  background: #b0b4b4;
}

.quick-more {
  flex-direction: column;
  justify-content: center;
  gap: 2px;
  height: 36px;
  margin-left: 6px;
  padding-left: 12px;
  border-left: 1px solid #a9adad;
}

.quick-more::before {
  content: "";
  width: 12px;
  height: 2px;
  background: #4a4d4e;
}

.title {
  flex: 1;
  margin: 0;
  padding-right: 20px;
  text-align: center;
  font-size: 20px;
  font-weight: 400;
  color: #a9adad;
}

.tabs {
  display: flex;
  gap: 1px;
  height: 41px;
  background: #3e4647;
}

.tab {
  padding: 1px 33px 0;
  font-size: 20px;
  color: #fff;
}

.tab.file {
  padding: 1px 30px 0;
  margin-right: -1px;
  background: linear-gradient(170deg, #66d140, #4da233);
}

.tab.active {
  padding-right: 34px;
  margin-right: -1px;
  background: #f7f9fc;
  color: #437c22;
}

.ribbon {
  display: flex;
  padding: 3px 0;
  background: #f7f9fc;
  border-bottom: 1px solid #adbcbc;
}

.group {
  display: flex;
  flex-direction: column;
  align-items: center;
  height: 158px;
  border-right: 1px solid #a9adaf;
}

.group-body {
  display: flex;
  flex: 1;
  gap: 12px;
  margin-top: -2px;
  padding: 0 10px;
}

.group-name {
  gap: 6px;
  height: 32px;
  padding: 0 7px;
}

.col {
  display: flex;
  flex-direction: column;
}

.cmd {
  gap: 6px;
  height: 40px;
}

.cmd .seta {
  margin-left: 5px;
}

.cmd:disabled {
  color: #aeb1b2;
}

.cmd:disabled .seta {
  background: #aeb1b2;
}

.big {
  flex-direction: column;
  min-width: 48px;
  padding-top: 8px;
}

.big-ico {
  width: 48px;
  height: 48px;
  margin-bottom: 12px;
}

.big .seta {
  margin-top: 9px;
}

.main {
  display: flex;
  flex: 1;
}

.side {
  flex: none;
  width: 400px;
  border-right: 4px solid #dadfdf;
  background: #f7f9fc;
}

.side-tabs {
  display: flex;
  height: 38px;
  background: #dadfdf;
}

.side-tab {
  justify-content: center;
  width: 47px;
}

.side-tab.active {
  background: #f7f9fc;
}

.side-tools {
  display: flex;
  align-items: center;
  height: 48px;
  padding-left: 15px;
}

.grip {
  display: flex;
  flex-direction: column;
  gap: 3px;
  margin: 0 23px 0 8px;
}

.grip i {
  width: 3px;
  height: 3px;
  border-radius: 2px;
  background: #bfc2c3;
}

.tool {
  justify-content: center;
  box-sizing: border-box;
  width: 36px;
  height: 36px;
}

.tool.on,
.view-btn.on {
  border: 1px solid #a9acae;
  background: #dfe0e2;
}

.tool.more {
  width: 30px;
  font-size: 24px;
  font-weight: 400;
}

.sep {
  width: 1px;
  height: 36px;
  margin: 0 6px;
  background: #a9adaf;
}

.search {
  display: flex;
  align-items: center;
  padding-left: 18px;
}

.search-box {
  display: flex;
  align-items: center;
  box-sizing: border-box;
  width: 281px;
  height: 42px;
  margin: 0 9px 0 6px;
  padding-right: 8px;
  border: 1px solid #9fabad;
  background: #fff;
}

.search-box input {
  flex: 1;
  min-width: 0;
  border: 0;
  outline: none;
  background: none;
  font: inherit;
}

.add {
  margin-left: 14px;
}

.tree {
  margin: 0;
  padding: 7px 0 5px;
  list-style: none;
}

.tree li {
  display: flex;
  align-items: center;
  gap: 7px;
  height: 30px;
  padding-left: 46px;
  font-weight: 400;
  color: #4d5051;
}

.tree .root {
  padding-left: 15px;
}

.tree .design {
  padding-left: 25px;
  font-weight: 300;
  color: #3c3f40;
}

.caret {
  margin-right: 4px;
}

.insert {
  height: 10px;
  margin: 0 7px 0 16px;
  border: solid #5fc63e;
  border-width: 0 1px;
  background: linear-gradient(#a9e294 0 2px, #5fc63e 2px 4px) 0 3px / 100% 4px no-repeat;
}

.canvas {
  position: relative;
  flex: 1;
  background: #e8e9ed;
}

.scene {
  position: absolute;
  top: 0;
  left: 0;
}

.planes path {
  fill: #7b5d58;
  fill-opacity: 0.08;
  stroke: #7d4a50;
}

.axes {
  font-family: Inter, sans-serif;
  font-size: 18px;
  font-weight: 300;
}

.view-tools {
  position: absolute;
  top: 7px;
  right: 289px;
  display: flex;
  gap: 2px;
  padding: 4px;
  border: 1px solid #9b9da2;
  background: #f7f9fc;
}

.view-btn {
  position: relative;
  justify-content: center;
  box-sizing: border-box;
  width: 36px;
  height: 36px;
}

.corner {
  position: absolute;
  right: 3px;
  bottom: 3px;
  width: 5px;
  height: 5px;
  background: #666;
  clip-path: polygon(100% 0, 100% 100%, 0 100%);
}

.note {
  position: absolute;
  top: 0;
  left: 0;
  pointer-events: none;
}

.note text {
  fill: #ed1c24;
  font-size: 105px;
  font-weight: 400;
}
</style>
